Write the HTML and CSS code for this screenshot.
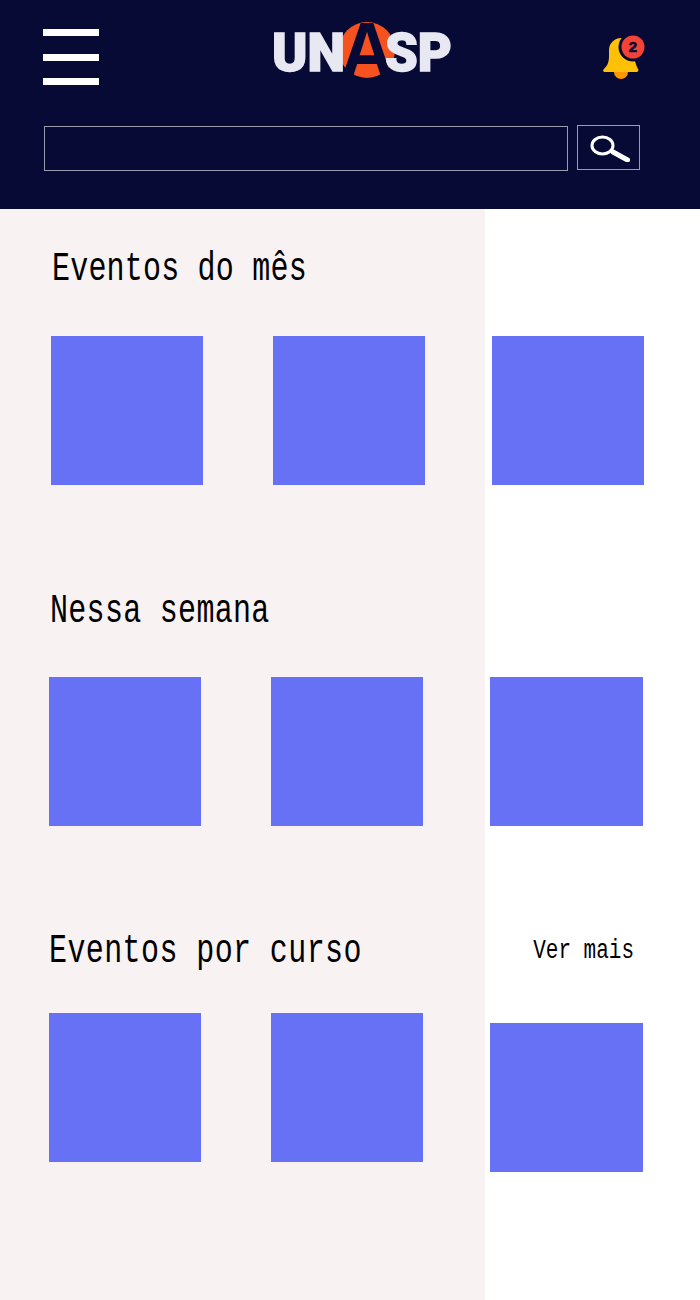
FILE: index.html
```html
<!DOCTYPE html>
<html>
<head>
  <title>Eventos</title>
  <link rel="stylesheet" href="styles.css">
</head>
<body>
  <header class="topbar">
    <div class="topbar-row">
      <div class="menu-btn">
        <span class="menu-bar"></span>
        <span class="menu-bar"></span>
        <span class="menu-bar"></span>
      </div>
      <svg class="logo" width="176" height="56" viewBox="0 0 176 56">
        <circle cx="93" cy="28" r="28" fill="#f55220"/>
        <text class="logo-a" x="66" y="56" textLength="54" lengthAdjust="spacingAndGlyphs">A</text>
        <text class="logo-text" x="-2" y="49" textLength="73" lengthAdjust="spacingAndGlyphs">UN</text>
        <text class="logo-text" x="111" y="49" textLength="67" lengthAdjust="spacingAndGlyphs">SP</text>
      </svg>
      <svg class="bell" width="42" height="44" viewBox="0 0 42 44">
        <path d="M18 37h-16c-2 0-2.500-2-1-3 3-3 5-6 5-13v-6c0-6 5-12 12-12 4 0 8 3 8 3l6 20c1 4 2 6 3 8 1 1 0 3-1 3z" fill="#ffc107"/>
        <path d="M11 37h14a7 7 0 0 1-14 0z" fill="#ff9800"/>
        <circle cx="30" cy="12" r="14.500" fill="#060a34"/>
        <circle cx="30" cy="12" r="11.500" fill="#f44336"/>
        <text class="bell-count" x="30" y="17" text-anchor="middle">2</text>
      </svg>
    </div>
    <div class="search">
      <input class="search-input" type="text">
      <button class="search-btn">
        <svg width="42" height="28" viewBox="0 0 42 28">
          <ellipse cx="14.500" cy="11.500" rx="10.500" ry="8.500" fill="none" stroke="#fff" stroke-width="3"/>
          <path d="M25 18l14.500 8" fill="none" stroke="#fff" stroke-width="5" stroke-linecap="round"/>
        </svg>
      </button>
    </div>
  </header>

  <main class="content">
    <section class="events events-first">
      <div class="events-head">
        <h2>Eventos do mês</h2>
      </div>
      <div class="cards">
        <div class="card"></div>
        <div class="card"></div>
        <div class="card"></div>
      </div>
    </section>

    <section class="events events-week">
      <div class="events-head">
        <h2>Nessa semana</h2>
      </div>
      <div class="cards">
        <div class="card"></div>
        <div class="card"></div>
        <div class="card"></div>
      </div>
    </section>

    <section class="events events-course">
      <div class="events-head">
        <h2>Eventos por curso</h2>
        <a class="more">Ver mais</a>
      </div>
      <div class="cards">
        <div class="card"></div>
        <div class="card"></div>
        <div class="card card-low"></div>
      </div>
    </section>
  </main>
</body>
</html>
```

FILE: styles.css
```css
body {
  margin: 0;
  background-color: #fff;
  font-family: "Liberation Mono", monospace;
}
.topbar {
  height: 209px;
  box-sizing: border-box;
  padding: 22px 60px 0 43px;
  background-color: #060a34;
}
.topbar-row {
  display: flex;
  align-items: flex-start;
  height: 103px;
}
.menu-btn {
  flex: none;
  width: 56px;
  margin-top: 7px;
  margin-right: 175px;
}
.menu-bar {
  display: block;
  height: 7px;
  background-color: #fff;
  margin-bottom: 18px;
}
.menu-bar + .menu-bar {
  margin-bottom: 0;
}
.menu-bar:last-child {
  margin-top: 17px;
}
.logo {
  display: block;
  flex: none;
  margin-right: 153px;
  overflow: visible;
}
.logo-a {
  font-family: "Liberation Sans", sans-serif;
  font-weight: bold;
  font-size: 80px;
  fill: #060a34;
}
.logo-text {
  font-family: Roboto, "Liberation Sans", sans-serif;
  font-weight: 900;
  font-size: 54px;
  fill: #e8e8f2;
  stroke: #e8e8f2;
  stroke-width: 1.500px;
}
.bell {
  display: block;
  flex: none;
  margin-top: 13px;
}
.bell-count {
  font-family: "Liberation Sans", sans-serif;
  font-weight: bold;
  font-size: 15px;
  fill: #060a34;
  stroke: #060a34;
  stroke-width: .6px;
}
.search {
  display: flex;
  align-items: flex-start;
  padding-left: 1px;
}
.search-input {
  width: 524px;
  height: 45px;
  box-sizing: border-box;
  border: 1px solid #9a9cad;
  background: none;
  border-radius: 0;
  padding: 0;
  margin: 1px 9px 0 0;
}
.search-btn {
  display: flex;
  align-items: center;
  justify-content: center;
  width: 63px;
  height: 45px;
  box-sizing: border-box;
  border: 1px solid #9a9cad;
  background: none;
  padding: 0;
}
.content {
  width: 485px;
  height: 1091px;
  background-color: #f8f2f3;
}
.events {
  padding-left: 49px;
}
.events-first {
  padding-left: 51px;
  padding-top: 36px;
}
.events-week {
  padding-top: 102px;
}
.events-course {
  padding-top: 101px;
}
.events-head {
  display: flex;
  justify-content: space-between;
  align-items: center;
  width: 585px;
  height: 44px;
}
/* the font is narrow and tall, so stretch it */
.events-head h2 {
  margin: 3px 0 0;
  font-size: 30px;
  font-weight: normal;
  letter-spacing: .4px;
  color: #000;
  transform: scaleY(1.35);
}
.events-first h2 {
  margin-left: 1px;
  letter-spacing: .2px;
}
.events-week h2 {
  margin-left: 1px;
  letter-spacing: .3px;
}
.more {
  margin-top: 2px;
  font-size: 21px;
  color: #000;
  transform: scaleY(1.35);
}
.cards {
  display: flex;
  align-items: flex-start;
  margin-top: 46px;
}
.events-first .cards {
  margin-top: 47px;
}
.events-course .cards {
  margin-top: 42px;
}
.card {
  flex: none;
  width: 152px;
  height: 149px;
  background-color: #6771f5;
  margin-right: 70px;
}
.card:last-child {
  margin-left: -3px;
  margin-right: 0;
}
.events-week .card:last-child,
.events-course .card:last-child {
  width: 153px;
}
.card-low {
  margin-top: 10px;
}
```
